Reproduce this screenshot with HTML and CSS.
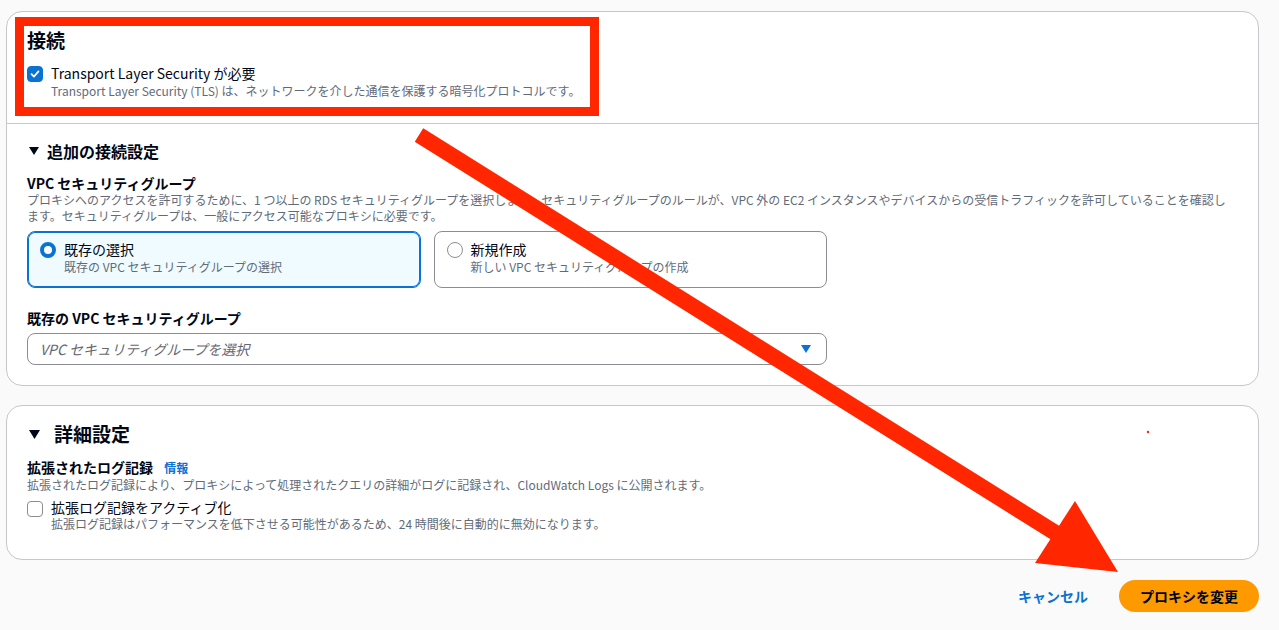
FILE: index.html
```html
<!DOCTYPE html>
<html lang="ja">
<head>
  <meta charset="UTF-8">
  <title>プロキシを変更</title>
  <link rel="stylesheet" href="styles.css">
</head>
<body>
  <div class="page">
    <div class="card">
      <div class="card-head">
        <h2 class="title">接続</h2>
        <div class="check-row">
          <span class="checkbox checked">
            <svg width="16" height="16" viewBox="0 0 16 16"><path d="M4 8.2 L6.8 11 L12 5" fill="none" stroke="#fff" stroke-width="2" stroke-linecap="round" stroke-linejoin="round"/></svg>
          </span>
          <div>
            <div class="check-label">Transport Layer Security が必要</div>
            <div class="desc">Transport Layer Security (TLS) は、ネットワークを介した通信を保護する暗号化プロトコルです。</div>
          </div>
        </div>
      </div>

      <div class="card-body">
        <div class="expander">
          <svg class="caret" width="10" height="8" viewBox="0 0 10 8"><path d="M0 0 H10 L5 8 Z" fill="#000716"/></svg>
          <span>追加の接続設定</span>
        </div>

        <div class="field-label">VPC セキュリティグループ</div>
        <div class="desc wrap">プロキシへのアクセスを許可するために、1 つ以上の RDS セキュリティグループを選択します。セキュリティグループのルールが、VPC 外の EC2 インスタンスやデバイスからの受信トラフィックを許可していることを確認します。セキュリティグループは、一般にアクセス可能なプロキシに必要です。</div>

        <div class="tiles">
          <div class="tile selected">
            <span class="radio on"></span>
            <div>
              <div class="tile-title">既存の選択</div>
              <div class="desc">既存の VPC セキュリティグループの選択</div>
            </div>
          </div>
          <div class="tile">
            <span class="radio"></span>
            <div>
              <div class="tile-title">新規作成</div>
              <div class="desc">新しい VPC セキュリティグループの作成</div>
            </div>
          </div>
        </div>

        <div class="field-label spaced">既存の VPC セキュリティグループ</div>
        <div class="select">
          <span class="placeholder">VPC セキュリティグループを選択</span>
          <svg width="10" height="8" viewBox="0 0 10 8"><path d="M0 0 H10 L5 8 Z" fill="#0972d3"/></svg>
        </div>
      </div>
    </div>

    <div class="card second">
      <div class="card-body top">
        <div class="expander big">
          <svg class="caret" width="11" height="9" viewBox="0 0 11 9"><path d="M0 0 H11 L5.5 9 Z" fill="#000716"/></svg>
          <span>詳細設定</span>
        </div>

        <div class="field-label">拡張されたログ記録 <a class="info">情報</a></div>
        <div class="desc">拡張されたログ記録により、プロキシによって処理されたクエリの詳細がログに記録され、CloudWatch Logs に公開されます。</div>

        <div class="check-row small">
          <span class="checkbox"></span>
          <div>
            <div class="check-label">拡張ログ記録をアクティブ化</div>
            <div class="desc">拡張ログ記録はパフォーマンスを低下させる可能性があるため、24 時間後に自動的に無効になります。</div>
          </div>
        </div>
      </div>
    </div>

    <div class="actions">
      <button class="btn-link">キャンセル</button>
      <button class="btn-primary">プロキシを変更</button>
    </div>
  </div>

  <svg class="annotation" width="1279" height="630" viewBox="0 0 1279 630">
    <rect x="19.5" y="21.5" width="575" height="90" fill="none" stroke="#ff2600" stroke-width="9"/>
    <line x1="419" y1="135" x2="1062" y2="537" stroke="#ff2600" stroke-width="16"/>
    <polygon points="1035,563 1075,501 1118,572" fill="#ff2600"/>
    <circle cx="1148" cy="432" r="1.2" fill="#ff2600"/>
  </svg>
</body>
</html>
```

FILE: styles.css
```css
body {
  margin: 0;
  background: #fafafa;
  color: #000716;
  font-family: "Noto Sans CJK JP", "Noto Sans", sans-serif;
  font-size: 14px;
  position: relative;
  height: 630px;
  overflow: hidden;
}
.page { padding: 11px 20px 0 6px; }
.card {
  background: #fff;
  border: 1px solid #c6c6cd;
  border-radius: 16px;
}
.card.second { margin-top: 19px; }
.card-head {
  padding: 16px 20px 24px 20px;
  border-bottom: 1px solid #c6c6cd;
}
.title { margin: 0; font-size: 19px; line-height: 24px; font-weight: 700; }
.check-row { display: flex; gap: 8px; margin-top: 11px; }
.check-row.small { margin-top: 5px; }
.checkbox {
  width: 14px; height: 14px; flex: none; margin-top: 3px;
  border: 1px solid #8c8c94; border-radius: 4px; background: #fff;
  display: flex; align-items: center; justify-content: center;
}
.checkbox.checked { background: #0972d3; border-color: #0972d3; }
.check-label { line-height: 20px; }
.check-row.small .check-label { line-height: 18px; }
.desc { font-size: 12px; line-height: 16px; color: #5f6b7a; }
.desc.wrap { max-width: 1205px; }
.card-body { padding: 16px 20px 20px 20px; }
.card-body.top { padding: 16px 20px 27px 20px; }
.expander {
  display: flex; align-items: center; gap: 8px;
  font-size: 16px; font-weight: 700; line-height: 22px; padding-left: 2px;
}
.expander.big { font-size: 19px; line-height: 24px; gap: 14px; }
.field-label { font-weight: 700; line-height: 18px; margin-top: 12px; }
.field-label.spaced { margin-top: 21px; }
.info { color: #0972d3; font-size: 12px; margin-left: 8px; }
.tiles {
  display: grid; grid-template-columns: 1fr 1fr; gap: 13px;
  width: 800px; margin-top: 7px;
}
.tile {
  display: flex; gap: 8px; height: 57px; box-sizing: border-box;
  padding: 7px 12px 0 12px;
  border: 1px solid #8c8c94; border-radius: 8px;
}
.tile.selected {
  background: #f0fbff; border-color: #0972d3;
  box-shadow: inset 0 0 0 1px #0972d3;
}
.tile-title { line-height: 20px; }
.radio {
  width: 14px; height: 14px; flex: none; margin-top: 3px;
  border: 1px solid #8c8c94; border-radius: 50%; background: #fff;
}
.radio.on { width: 8px; height: 8px; border: 4px solid #0972d3; }
.select {
  width: 800px; height: 32px; box-sizing: border-box; margin-top: 6px;
  border: 1px solid #8c8c94; border-radius: 8px;
  display: flex; align-items: center; justify-content: space-between;
  padding: 0 15px 0 12px;
}
.placeholder { color: #656871; font-style: italic; }
.actions {
  display: flex; justify-content: flex-end; align-items: center;
  gap: 31px; margin-top: 20px;
}
.btn-link {
  border: none; background: none; padding: 0;
  color: #0972d3; font: inherit; font-weight: 700;
}
.btn-primary {
  height: 32px; padding: 0 21px; border: none; border-radius: 16px;
  background: #ff9900; color: #000716; font: inherit; font-weight: 700;
}
.annotation { position: absolute; top: 0; left: 0; pointer-events: none; }
```
